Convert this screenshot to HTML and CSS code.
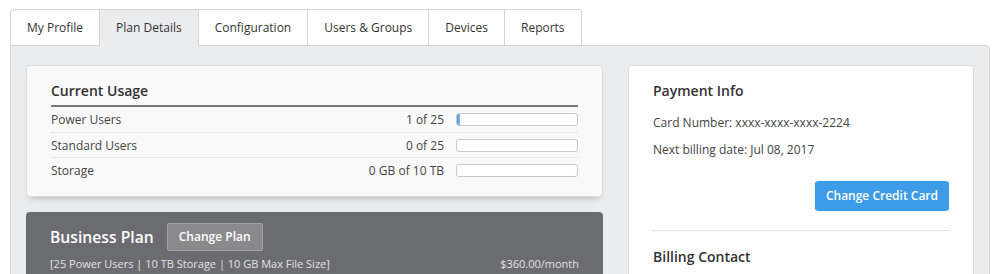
FILE: index.html
```html
<!DOCTYPE html>
<html>

<head>
	<meta charset="UTF-8">
	<title>Plan Details</title>
	<link rel="stylesheet" href="styles.css">
</head>

<body>
	<div class="tabs">
		<a href="javascript:;">My Profile</a>
		<a href="javascript:;" class="active">Plan Details</a>
		<a href="javascript:;">Configuration</a>
		<a href="javascript:;">Users &amp; Groups</a>
		<a href="javascript:;">Devices</a>
		<a href="javascript:;">Reports</a>
	</div>
	<div class="panel">
		<div class="left">
			<div class="usage">
				<h3>Current Usage</h3>
				<div class="row">
					<span class="name">Power Users</span>
					<span class="val">1 of 25</span>
					<span class="bar"><i style="width: 3px"></i></span>
				</div>
				<div class="row">
					<span class="name">Standard Users</span>
					<span class="val">0 of 25</span>
					<span class="bar"></span>
				</div>
				<div class="row">
					<span class="name">Storage</span>
					<span class="val">0 GB of 10 TB</span>
					<span class="bar"></span>
				</div>
			</div>
			<div class="plan">
				<div class="plan-top">
					<span class="plan-name">Business Plan</span>
					<a href="javascript:;" class="btn-gray">Change Plan</a>
				</div>
				<div class="plan-info">
					<span>[25 Power Users | 10 TB Storage | 10 GB Max File Size]</span>
					<span>$360.00/month</span>
				</div>
			</div>
		</div>
		<div class="pay">
			<h3>Payment Info</h3>
			<p class="first">Card Number: xxxx-xxxx-xxxx-2224</p>
			<p>Next billing date: Jul 08, 2017</p>
			<div class="pay-btn">
				<a href="javascript:;" class="btn-blue">Change Credit Card</a>
			</div>
			<h3 class="contact">Billing Contact</h3>
		</div>
	</div>
</body>

</html>
```

FILE: styles.css
```css
html,
body {
	margin: 0;
	height: 100%;
}

body {
	padding: 9px 10px 0;
	box-sizing: border-box;
	font-family: "Open Sans", "Liberation Sans", sans-serif;
	font-size: 13px;
	color: #444;
	background: #fff;
	overflow: hidden;
}

a {
	text-decoration: none;
	color: #333;
}

h3,
p {
	margin: 0;
}

.tabs {
	display: flex;
	position: relative;
	z-index: 1;
	margin-bottom: -1px;
}

.tabs a {
	display: block;
	height: 35px;
	line-height: 35px;
	padding: 0 16px;
	border: 1px solid #d4d4d4;
	border-left: none;
	background: #fff;
	font-size: 12px;
}

.tabs a:first-child {
	border-left: 1px solid #d4d4d4;
	border-top-left-radius: 4px;
}

.tabs a:last-child {
	border-top-right-radius: 4px;
}

.tabs a.active {
	background: #ebecee;
	border-bottom-color: #ebecee;
}

.panel {
	display: grid;
	grid-template-columns: 577px 346px;
	column-gap: 25px;
	align-items: start;
	width: 948px;
	padding: 19px 15px 0;
	border: 1px solid #d6d6d6;
	border-top-right-radius: 4px;
	background: #ebecee;
}

.left {
	display: flex;
	flex-direction: column;
	gap: 15px;
}

.usage {
	background: #f9f9f9;
	border: 1px solid #dcdcdc;
	border-radius: 4px;
	padding: 15px 24px 14px;
	box-shadow: 0 5px 6px -4px rgba(0, 0, 0, 0.25);
}

.usage h3 {
	font-size: 14px;
	font-weight: 600;
	line-height: 20px;
	color: #333;
	padding-bottom: 4px;
	border-bottom: 2px solid #777;
}

.row {
	display: flex;
	align-items: center;
	height: 25px;
	font-size: 12px;
	color: #444;
}

.row + .row {
	height: 24px;
	border-top: 1px dotted #d6d6d6;
}

.row .name {
	flex: 1;
}

.row .val {
	margin-right: 12px;
}

.bar {
	display: block;
	width: 120px;
	height: 11px;
	border: 1px solid #c8c8c8;
	border-radius: 3px;
	background: #fff;
	overflow: hidden;
}

.bar i {
	display: block;
	height: 100%;
	background: linear-gradient(to right, #4a8fd0, #8dbbe6);
}

.plan {
	background: #6b6c71;
	border-radius: 4px 4px 0 0;
	padding: 11px 24px 0;
	height: 51px;
	color: #fff;
}

.plan-top {
	display: flex;
	align-items: center;
	height: 28px;
}

.plan-name {
	font-size: 15.7px;
	font-weight: 600;
	margin-right: 13px;
}

.btn-gray {
	display: block;
	height: 26px;
	line-height: 26px;
	padding: 0 11px;
	border: 1px solid #a4a4a6;
	border-radius: 2px;
	background: #8a8a8c;
	color: #fff;
	font-size: 12px;
	font-weight: 600;
}

.plan-info {
	display: flex;
	justify-content: space-between;
	margin-top: 4px;
	line-height: 18px;
	font-size: 11px;
	color: #e2e2e4;
}

.pay {
	background: #fff;
	border: 1px solid #dcdcdc;
	border-bottom: none;
	border-radius: 4px 4px 0 0;
	padding: 15px 24px 0;
	height: 193px;
}

.pay h3 {
	font-size: 14px;
	font-weight: 600;
	line-height: 20px;
	color: #333;
}

.pay p {
	line-height: 20px;
	font-size: 12px;
	margin-top: 7px;
}

.pay p.first {
	margin-top: 12px;
}

.pay-btn {
	display: flex;
	justify-content: flex-end;
	margin-top: 21px;
	padding-bottom: 19px;
	border-bottom: 1px dotted #cfcfcf;
}

.btn-blue {
	display: block;
	height: 30px;
	line-height: 30px;
	padding: 0 11px;
	border-radius: 3px;
	background: #3d9be9;
	color: #fff;
	font-size: 12px;
	font-weight: 600;
}

.pay h3.contact {
	margin-top: 16px;
}
```
